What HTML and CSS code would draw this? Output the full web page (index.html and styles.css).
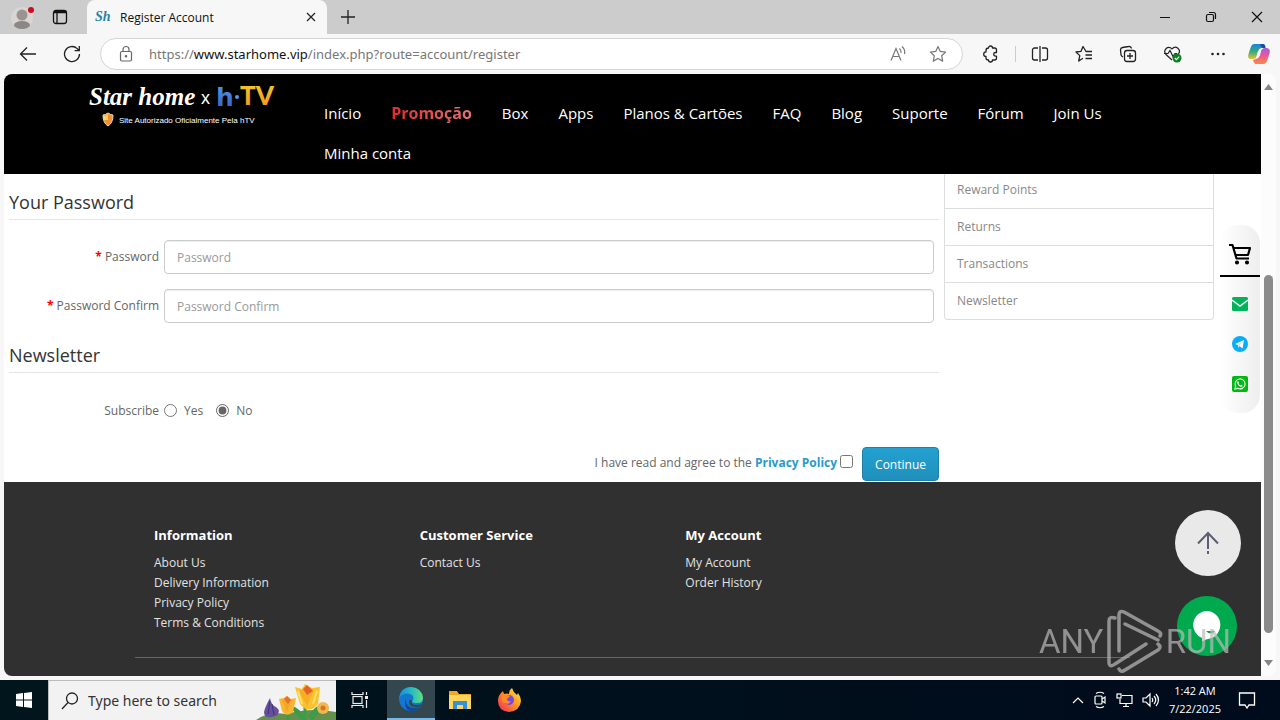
FILE: index.html
```
<!DOCTYPE html>
<html lang="en">
<head>
<meta charset="utf-8">
<title>Register Account</title>
<link rel="stylesheet" href="styles.css">
</head>
<body>
<div class="desktop">
  <header class="tabbar">
    <button class="plain avatar" aria-label="Profile"><svg width="26" height="26" viewBox="0 0 26 26"><circle cx="12" cy="14" r="11" fill="#d9d5d3"/><circle cx="12" cy="11" r="5.500" fill="#999491"/><ellipse cx="12" cy="21" rx="8" ry="4" fill="#8c8784"/><circle cx="21" cy="6" r="3" fill="#d00a20"/></svg></button>
    <button class="plain tabs-menu" aria-label="Tab actions"><svg width="16" height="16" viewBox="0 0 16 16" fill="none" stroke="#111" stroke-width="1.300"><rect x="1.500" y="1.500" width="13" height="13" rx="2.500"/><path d="M2 3h12" stroke-width="2.500"/><path d="M5 4v10"/></svg></button>
    <div class="tab">
      <span class="favicon">Sh</span>
      <span class="tab-title">Register Account</span>
      <button class="plain" aria-label="Close tab"><svg width="12" height="12" viewBox="0 0 12 12" stroke="#222" stroke-width="1.200"><path d="M2 2l8 8M10 2l-8 8"/></svg></button>
    </div>
    <button class="plain new-tab" aria-label="New tab"><svg width="16" height="16" viewBox="0 0 16 16" stroke="#222" stroke-width="1.300"><path d="M8 1v14M1 8h14"/></svg></button>
    <div class="window-buttons">
      <button class="plain" aria-label="Minimize"><svg width="12" height="12" viewBox="0 0 12 12" stroke="#111"><path d="M1 6.500h10"/></svg></button>
      <button class="plain" aria-label="Restore"><svg width="12" height="12" viewBox="0 0 12 12" fill="none" stroke="#111" stroke-width="1.200"><rect x="1.500" y="3.500" width="7" height="7" rx="1.500"/><path d="M4 1.500h4.500a2 2 0 0 1 2 2V8"/></svg></button>
      <button class="plain" aria-label="Close"><svg width="12" height="12" viewBox="0 0 12 12" stroke="#111" stroke-width="1.200"><path d="M1 1l10 10M11 1L1 11"/></svg></button>
    </div>
  </header>

  <div class="toolbar">
    <button class="plain tool" aria-label="Back"><svg width="18" height="18" viewBox="0 0 18 18" fill="none" stroke="#222" stroke-width="1.300"><path d="M17 9H1.500M8 2.500L1.500 9 8 15.500"/></svg></button>
    <button class="plain tool" aria-label="Refresh"><svg width="18" height="18" viewBox="0 0 18 18" fill="none" stroke="#222" stroke-width="1.300"><path d="M16.500 9a7.500 7.500 0 1 1-2.300-5.400L16 5.500M16.300 1v4.700h-4.700"/></svg></button>
    <div class="address">
      <svg width="16" height="18" viewBox="0 0 16 18" fill="none" stroke="#666" stroke-width="1.200"><rect x="2.500" y="6.500" width="11" height="9.500" rx="1.500"/><path d="M5 6.500V4.500a3 3 0 0 1 6 0v2"/><circle cx="8" cy="11.300" r=".7" fill="#666"/></svg>
      <div class="url">https://<b>www.starhome.vip</b>/index.php?route=account/register</div>
      <button class="plain" aria-label="Read aloud"><svg width="18" height="18" viewBox="0 0 18 18" fill="none" stroke="#777" stroke-width="1.200"><path d="M2 15.500L7 3.500l5 12M3.800 11.500h6.400M10.500 3.500q2 1.800 1.500 4.500M13 1.500q3.500 3 2.500 7.500"/></svg></button>
      <button class="plain" aria-label="Add to favorites"><svg width="18" height="18" viewBox="0 0 18 18" fill="none" stroke="#777" stroke-width="1.200" stroke-linejoin="round"><path d="M9 1.500l2.300 4.900 5.300.7-3.900 3.700 1 5.300L9 13.500l-4.700 2.600 1-5.300L1.400 7.100l5.300-.7z"/></svg></button>
    </div>
    <div class="tools">
      <button class="plain tool" aria-label="Extensions"><svg width="18" height="18" viewBox="0 0 18 18" fill="none" stroke="#222" stroke-width="1.300" stroke-linejoin="round"><path d="M4 5.500Q4 3 6.500 3a2 2 0 0 1 4 0h2q2 0 2 2v2.500h-1a1.800 1.800 0 0 0 0 3.600h1V13q0 2-2 2h-2a2 2 0 0 1-4 0Q4 15 4 13v-1.500a2.300 2.300 0 0 1 0-4.600z"/></svg></button>
      <i class="divider"></i>
      <button class="plain tool" aria-label="Split screen"><svg width="18" height="18" viewBox="0 0 18 18" fill="none" stroke="#222" stroke-width="1.300"><path d="M7 3H3.500a2 2 0 0 0-2 2v8a2 2 0 0 0 2 2H7M11 3h3.500a2 2 0 0 1 2 2v8a2 2 0 0 1-2 2H11M9 1v16"/></svg></button>
      <button class="plain tool" aria-label="Favorites"><svg width="18" height="18" viewBox="0 0 18 18" fill="none" stroke="#222" stroke-width="1.300" stroke-linejoin="round"><path d="M17 6.500h-6L8 1.500 6 6.300l-5 .7 3.800 3.600L3.700 16 8 13.300M10.500 10H17M10.500 13.500H17"/></svg></button>
      <button class="plain tool" aria-label="Collections"><svg width="18" height="18" viewBox="0 0 18 18" fill="none" stroke="#222" stroke-width="1.300"><path d="M4 12l-.5-.3A3 3 0 0 1 2 9.800L1.500 5a2.500 2.500 0 0 1 2-2.500l6-1A2.500 2.500 0 0 1 12.500 3.500"/><rect x="5.500" y="5.500" width="11" height="11" rx="2.500"/><path d="M11 8v6M8 11h6"/></svg></button>
      <button class="plain tool" aria-label="Browser essentials"><svg width="20" height="18" viewBox="0 0 20 18" fill="none" stroke="#222" stroke-width="1.200"><path d="M9 15L3 9.500C-.5 5.500 5-.5 9 3.800c4-4.300 9.500 1 6.500 5M1 8.500h4l2-3 3 6 2-3h2"/><circle cx="14" cy="13" r="4.500" fill="#0b8020" stroke="none"/><path d="M11.800 13l1.600 1.600 2.800-3" stroke="#fff"/></svg></button>
      <button class="plain tool" aria-label="Settings and more"><svg width="18" height="18" viewBox="0 0 18 18" fill="#222"><circle cx="3.500" cy="9" r="1.300"/><circle cx="9" cy="9" r="1.300"/><circle cx="14.500" cy="9" r="1.300"/></svg></button>
      <button class="plain tool copilot" aria-label="Copilot"><svg width="24" height="22" viewBox="0 0 24 22"><defs><linearGradient id="ca" x2="0" y2="1"><stop stop-color="#1684d8"/><stop offset=".55" stop-color="#3dae75"/><stop offset="1" stop-color="#f4bd28"/></linearGradient><linearGradient id="cb" x2="0" y2="1"><stop stop-color="#a75be0"/><stop offset=".5" stop-color="#ec5a92"/><stop offset="1" stop-color="#fa8a45"/></linearGradient></defs><path d="M7 1h9q2 0 2.500 3L15 5q-3 0-4 4l-1 4q-1 3-4 3H4Q0 16 1.500 11L4 3.500Q5 1 7 1z" fill="url(#ca)"/><path d="M17 21H9q-2 0-3-4l3-1q3-1 4-4l1-4q1-3 4-3h2q4 1 2.500 5.500L20 18q-1 3-3 3z" fill="url(#cb)"/><path d="M11 8l3-1-2 7-3 1z" fill="#fff"/><path d="M13 1h3q2 0 2.500 4h-3q-1.500-1-2.500-4z" fill="#184ca5"/></svg></button>
    </div>
  </div>

  <div class="frame">
    <div class="page">
      <header class="site-header">
        <a class="logo" href="#">
          <svg width="210" height="54" viewBox="0 -4 210 54"><defs><linearGradient id="ht" x2="0" y2="1"><stop stop-color="#5798e8"/><stop offset="1" stop-color="#315cc0"/></linearGradient><linearGradient id="tv" x2="0" y2="1"><stop stop-color="#f7d02b"/><stop offset="1" stop-color="#ef9021"/></linearGradient></defs>
            <text class="logo-script" x="1" y="25">Star home</text><text class="logo-x" x="113" y="24">x</text>
            <text class="logo-h" x="128" y="26">h</text><circle cx="149" cy="17" r="2" fill="#5798e8"/><text class="logo-tv" x="152" y="25">TV</text>
            <path d="M20 33q-3 2-5 2 0 8 5 11 5-3 5-11-2 0-5-2z" fill="#f28d38" stroke="#f7dcae"/><path d="M20 34v6h-4q-1-2-1-4 3 0 5-2z" fill="#fbd45b"/>
            <text class="logo-note" x="31" y="43">Site Autorizado Oficialmente Pela hTV</text></svg>
        </a>
        <nav class="menu"><a href="#">Início</a><a class="promo" href="#">Promoção</a><a href="#">Box</a><a href="#">Apps</a><a href="#">Planos &amp; Cartões</a><a href="#">FAQ</a><a href="#">Blog</a><a href="#">Suporte</a><a href="#">Fórum</a><a href="#">Join Us</a><a href="#">Minha conta</a></nav>
      </header>

      <main class="content">
        <form class="form">
          <h2>Your Password</h2>
          <div class="fields">
            <label for="pw"><span class="star">*</span> Password</label><input class="text-input" id="pw" type="password" placeholder="Password">
            <label for="pw2"><span class="star">*</span> Password Confirm</label><input class="text-input" id="pw2" type="password" placeholder="Password Confirm">
          </div>
          <h2>Newsletter</h2>
          <div class="subscribe"><span class="sub-label">Subscribe</span><label><input type="radio" name="news">Yes</label><label><input type="radio" name="news" checked>No</label></div>
          <div class="agree"><label for="agree">I have read and agree to the <a href="#">Privacy Policy</a></label><input id="agree" type="checkbox"><button class="continue" type="button">Continue</button></div>
        </form>
        <aside class="account-list"><a href="#">Reward Points</a><a href="#">Returns</a><a href="#">Transactions</a><a href="#">Newsletter</a></aside>
      </main>

      <footer class="site-footer">
        <div class="footer-inner">
          <div class="footer-columns">
            <section><h5>Information</h5><a href="#">About Us</a><a href="#">Delivery Information</a><a href="#">Privacy Policy</a><a href="#">Terms &amp; Conditions</a></section>
            <section><h5>Customer Service</h5><a href="#">Contact Us</a></section>
            <section><h5>My Account</h5><a href="#">My Account</a><a href="#">Order History</a></section>
          </div>
        </div>
      </footer>

      <div class="side-dock">
        <a class="cart" href="#" aria-label="Cart"><svg width="24" height="22" viewBox="0 0 24 22" fill="none" stroke="#000" stroke-width="2.200" stroke-linejoin="round"><path d="M1 2h3.500l4 13.500H21M5.500 5H22l-2 7H7.500"/><circle cx="9" cy="19.500" r="1.300" fill="#000" stroke-width="1.500"/><circle cx="19" cy="19.500" r="1.300" fill="#000" stroke-width="1.500"/></svg></a>
        <a href="#" aria-label="Email"><svg width="16" height="16" viewBox="0 0 16 16"><rect y="1" width="16" height="14" rx="1.500" fill="#00b35a"/><path d="M0 4l8 6 8-6" fill="none" stroke="#e8fff2" stroke-width="1.500"/></svg></a>
        <a href="#" aria-label="Telegram"><svg width="16" height="16" viewBox="0 0 16 16"><circle cx="8" cy="8" r="8" fill="#08aef5"/><path d="M3 8l9-4-1.500 8.500L7.500 10l-1 2L6 9z" fill="#fff"/><path d="M6 9l4-3-3 4" fill="#a8dcf5"/></svg></a>
        <a href="#" aria-label="WhatsApp"><svg width="16" height="16" viewBox="0 0 16 16"><rect width="16" height="16" rx="2" fill="#00b812"/><path d="M3 13l.7-2.700a5 5 0 1 1 2 2z" fill="none" stroke="#eaffea" stroke-width="1.200"/><path d="M6 5l1 2-.5.600q.8 1.400 2 1.900l.7-.7 1.500.800q-.4 1.500-1.800 1.200Q5.500 10 5.200 6.500q0-1 .8-1.500z" fill="#fff"/></svg></a>
      </div>
      <button class="plain to-top" aria-label="Back to top"><svg width="24" height="24" viewBox="0 0 24 24" fill="none" stroke="#5e5e72" stroke-width="2"><path d="M12 2v16M2 12.500L12 2l10 10.500M12 20v3"/></svg></button>
      <button class="plain chat" aria-label="Chat"><svg width="30" height="32" viewBox="0 0 30 32"><path d="M15 1a14 14 0 0 1 3 27.500q-4 .5-8 3V28A14 14 0 0 1 15 1z" fill="#fff"/><path d="M14 21h9q-4 5-9 0z" fill="#00a84e"/></svg></button>
    </div>
    <div class="scrollbar"><svg width="9" height="6"><path d="M0 6l4.500-6L9 6z" fill="#858585"/></svg><div class="track"><div class="thumb"></div></div><svg width="9" height="6"><path d="M0 0l4.500 6L9 0z" fill="#858585"/></svg></div>
    <div class="watermark"><span>ANY</span><svg width="56" height="64" viewBox="0 0 56 64" fill="none" stroke="currentColor" stroke-width="3.500" stroke-linejoin="round" stroke-linecap="round"><path d="M8 9Q2 7 2 12v42q1 5 6 1l31-20M18 15l33 16M12 42V6q0-5 5-3l34 19q4 2 2 5M12 60q2 4 6 1l33-20q4-3 0-6"/></svg><span>RUN</span></div>
  </div>

  <footer class="taskbar">
    <button class="plain start" aria-label="Start"><svg width="16" height="16" viewBox="0 0 16 16" fill="#fff"><path d="M0 2l7-1v6.500H0zM8 .9L16 0v7.500H8zM0 8.500h7V15l-7-1zM8 8.500h8V16l-8-1z"/></svg></button>
    <label class="search"><svg width="18" height="18" viewBox="0 0 18 18" fill="none" stroke="#222" stroke-width="1.300"><circle cx="11" cy="6.500" r="5.500"/><path d="M7 10.500L1 17"/></svg><input type="text" placeholder="Type here to search" aria-label="Search">
      <svg class="flowers" width="80" height="39" viewBox="0 0 80 39"><path d="M0 39q12-9 30-6 25-7 50-2v8z" fill="#64924e"/><path d="M49 39V26M48 36q-7-8-11-9l10 12zM53 36q9-12 13-11L55 39M32 39V26" fill="#45a650" stroke="#3e9b47" stroke-width="3"/><path d="M14 17q1 7 6 9 6 4 0 9-12 4-12-4 1-5 6-14z" fill="#67509b"/><path d="M14 20l-2 13M16 23l2 11" stroke="#403174"/><path d="M23 18l5-1 3-2 4 3 5-1-3 14q-6 6-11-1z" fill="#f8b52e"/><path d="M26 19l5 12 5-12" fill="#f5a527"/><path d="M28 18l3-3 4 4-3 4z" fill="#e3702b"/><path d="M39 6l7 2 3-5 7 4 8-1-2 17q-9 11-18 0z" fill="#fbc22d"/><path d="M43 10l8 15 7-16-6-3z" fill="#f7ae27"/><path d="M47 8l4-4 6 6-6 4z" fill="#e3642b"/><path d="M61 10l-4 13M42 10l4 13" stroke="#ffe16b" stroke-width="2"/><circle cx="67" cy="27" r="6" fill="#f3b84b"/><circle cx="67" cy="27" r="2.500" fill="#d77328"/></svg></label>
    <button class="plain app" aria-label="Task view"><svg width="18" height="18" viewBox="0 0 18 18" fill="none" stroke="#eee" stroke-width="1.200"><path d="M1 1v2.500h11V1M1 17v-2.500h11V17"/><rect x="2" y="5.500" width="9" height="7"/><path d="M15.500 1v3M15.500 9v8"/><path d="M14 6.500h3" stroke-width="3"/></svg></button>
    <button class="plain app active" aria-label="Edge"><svg width="26" height="26" viewBox="0 0 26 26"><defs><linearGradient id="ea"><stop stop-color="#168fdd"/><stop offset=".55" stop-color="#29bdc0"/><stop offset="1" stop-color="#63df77"/></linearGradient></defs><circle cx="13" cy="13" r="12" fill="#1376cf"/><path d="M1 12Q3 1 13 1q11 1 12 11 0 5-6 5-5 0-5-2 3-3 0-6Q7 5 1 12z" fill="url(#ea)"/><path d="M8 12q-1 10 9 10 4 0 6-3-3 6-10 6Q5 24 8 12z" fill="#104b98"/><path d="M14 14q-2 5 5 5 4 0 6-2-2 3-5 4-9 1-9-5 0-3 3-2z" fill="#35474e"/></svg></button>
    <button class="plain app" aria-label="File Explorer"><svg width="22" height="20" viewBox="0 0 22 20"><path d="M0 1h8l2 3h12v15H0z" fill="#f3a91c"/><path d="M0 5h22v14H0z" fill="#ffd65b"/><path d="M4 11h14v8h-4v-4H8v4H4z" fill="#3491d8"/></svg></button>
    <button class="plain app" aria-label="Firefox"><svg width="24" height="24" viewBox="0 0 24 24"><defs><linearGradient id="ff" x1="1" x2="0" y2="1"><stop stop-color="#fff04a"/><stop offset=".45" stop-color="#ff9822"/><stop offset="1" stop-color="#ef225f"/></linearGradient></defs><path d="M4 5l2-2 1 3q3-1 5 0 0-4 3-6 1 4 5 7l1-2q3 4 3 8-1 10-12 11Q1 23 1 13q0-5 3-8z" fill="url(#ff)"/><circle cx="12" cy="12" r="5" fill="#7848da"/><path d="M5 8q4-2 8 0l-3 3q0 3 4 2-2 4-6 2-4-1-3-7z" fill="#ff8b24"/></svg></button>
    <div class="tray">
      <svg width="12" height="8" viewBox="0 0 12 8" fill="none" stroke="#fff" stroke-width="1.200"><path d="M1 7l5-5 5 5"/></svg>
      <svg width="14" height="18" viewBox="0 0 14 18" fill="none" stroke="#fff" stroke-width="1.200"><rect x="2" y="5" width="7" height="8" rx="1"/><path d="M9 8l3-2v6l-3-2M3 2.500q4-2.500 8 0M3 15.500q4 2.500 8 0"/></svg>
      <svg width="17" height="16" viewBox="0 0 17 16" fill="none" stroke="#fff" stroke-width="1.200"><path d="M6 3.500h10v8H4V7M7 14.500h6M10 11.500v3"/><rect x="1" y="2" width="4" height="4"/></svg>
      <svg width="18" height="16" viewBox="0 0 18 16" fill="none" stroke="#fff" stroke-width="1.200"><path d="M1 6h3l4-4v12l-4-4H1zM10 6q1.500 2 0 4M12 4q3.500 4 0 8M14 2q5 6 0 12"/></svg>
      <div class="clock"><time>1:42 AM</time><time>7/22/2025</time></div>
      <svg class="notice" width="18" height="18" viewBox="0 0 18 18" fill="none" stroke="#fff" stroke-width="1.300"><path d="M1.500 2h15v12H11l-2 3-2-3H1.500z"/></svg>
    </div>
  </footer>
</div>
</body>
</html>
```
FILE: styles.css
```
* { box-sizing: border-box; }
body { margin: 0; font-family: "Open Sans", "Noto Sans", sans-serif; font-size: 12px; color: #666; }
a { color: inherit; text-decoration: none; }
svg { display: block; flex: none; }
.plain { display: flex; align-items: center; justify-content: center; flex: none; padding: 0; border: 0; background: transparent; }
.desktop { display: flex; flex-direction: column; height: 100vh; overflow: hidden; background: #f7f7f7; }

.tabbar { display: flex; align-items: center; flex: none; height: 34px; background: #ccc; }
.avatar { margin-left: 10px; }
.tabs-menu { margin-left: 16px; }
.tab { display: flex; align-items: center; align-self: stretch; width: 240px; margin-left: 19px; padding: 0 10px 0 8px; gap: 8px; border-radius: 8px 8px 0 0; background: #f7f7f7; color: #111; }
.favicon { width: 17px; font: italic bold 14px "Liberation Serif", serif; color: #2684ab; }
.tab-title { flex: 1; font-family: "Open Sans", sans-serif; }
.new-tab { margin-left: 13px; }
.window-buttons { display: flex; gap: 34px; margin-left: auto; padding-right: 17px; }

.toolbar { display: flex; align-items: center; flex: none; height: 40px; padding: 0 10px 0 16px; }
.toolbar > .tool { width: 24px; margin-right: 20px; }
.toolbar > .tool + .tool { margin-right: 16px; }
.address { display: flex; align-items: center; flex: 1; height: 32px; padding: 0 15px 0 17px; border: 1px solid #d5d5d5; border-radius: 16px; background: #fff; }
.url { flex: 1; padding-left: 15px; font-family: "Noto Sans", sans-serif; font-size: 13px; color: #777; white-space: nowrap; }
.url b { font-weight: 400; color: #111; }
.address .plain { margin-left: 22px; }
.tools { display: flex; align-items: center; gap: 26px; width: 288px; margin-left: 19px; }
.divider { flex: none; width: 1px; height: 16px; margin: 0 -11px; background: #ccc; }
.copilot { width: 16px; margin-left: -2px; }

.frame { position: relative; display: flex; flex: 1; min-height: 0; margin: 0 4px 4px; overflow: hidden; border-radius: 8px; background: #fcfcfc; }
.page { position: relative; display: flex; flex-direction: column; flex: 1; min-width: 0; background: #fff; }
.scrollbar { display: flex; flex-direction: column; align-items: center; width: 15px; padding: 10px 0; }
.track { display: flex; flex-direction: column; flex: 1; width: 9px; padding: 185px 0 27px; }
.thumb { flex: 1; border-radius: 5px; background: #8b8b8b; }

.site-header { display: flex; flex: none; min-height: 100px; padding: 2px 70px 0 84px; background: #000; color: #fff; }
.logo { flex: none; width: 236px; }
.logo text { fill: #fff; }
.logo .logo-script { font: italic bold 25px "Liberation Serif", serif; }
.logo .logo-x { font: 18px "Liberation Sans", sans-serif; }
.logo .logo-h { font: bold 25px "DejaVu Sans", sans-serif; fill: url(#ht); }
.logo .logo-tv { font: 900 26px Lato, sans-serif; fill: url(#tv); }
.logo .logo-note { font: 8px "Liberation Sans", sans-serif; }
.menu { display: flex; flex-wrap: wrap; align-content: flex-start; column-gap: 30px; padding-top: 17px; font-size: 15px; line-height: 40px; white-space: nowrap; }
.promo { font-size: 16px; font-weight: 700; background: linear-gradient(90deg, #e02c30, #e57373); background-clip: text; color: transparent; }

.content { display: flex; flex: none; align-items: flex-start; gap: 5px; padding: 0 47px 0 5px; }
.form { flex: 1; padding-top: 15px; }
h2 { margin: 0; padding-bottom: 4px; border-bottom: 1px solid #e5e5e5; font-size: 18px; font-weight: 400; line-height: 26px; color: #333; }
.fields { display: grid; grid-template-columns: 150px 1fr; gap: 15px 5px; padding: 20px 5px 19px 0; }
.fields label { padding-top: 7px; line-height: 20px; text-align: right; }
.star { font-weight: 700; color: #f00; }
.text-input { height: 34px; min-width: 0; padding: 0 12px; border: 1px solid #ccc; border-radius: 4px; box-shadow: inset 0 1px 1px #ededed; font: inherit; color: #555; }
.text-input::placeholder { color: #999; }
.subscribe { display: flex; align-items: center; height: 20px; margin-top: 27px; }
.sub-label { width: 150px; margin-right: 5px; text-align: right; }
.subscribe label { display: flex; align-items: center; margin-right: 13px; }
.subscribe input { width: 13px; height: 13px; margin: 0 7px 0 0; accent-color: #666; }
.agree { display: flex; justify-content: flex-end; margin-top: 27px; padding-bottom: 1px; line-height: 32px; }
.agree a { font-weight: 700; color: #2a9acb; }
.agree input { width: 13px; height: 13px; margin: 8px 9px 0 3px; }
.continue { height: 34px; padding: 2px 12px 0; border: 1px solid #1c80a9; border-radius: 4px; background: linear-gradient(#23a1d1, #1f90bb); color: #fff; font: inherit; line-height: 30px; }
.account-list { display: flex; flex-direction: column; width: 270px; border: 1px solid #ddd; border-top: 0; border-radius: 0 0 4px 4px; color: #888; }
.account-list a { padding: 8px 12px; border-bottom: 1px solid #ddd; line-height: 20px; }
.account-list a:first-child { padding: 6px 12px 8px; }
.account-list a:last-child { border-bottom: 0; }

.site-footer { flex: 1; padding: 40px 131px 0; background: #303030; color: #e2e2e2; }
.footer-inner { padding: 0 0 24px 19px; border-bottom: 1px solid #666; }
.footer-columns { display: grid; grid-template-columns: repeat(3, 1fr); max-width: 797px; }
.footer-columns section { display: flex; flex-direction: column; line-height: 20px; }
h5 { margin: 0 0 4px; padding: 3px 0 4px; font-size: 13px; font-weight: 700; line-height: 20px; color: #fff; }

.side-dock { position: absolute; top: 151px; right: 1px; display: flex; flex-direction: column; align-items: center; width: 40px; padding: 18px 0 21px; gap: 24px; border-radius: 18px; background: linear-gradient(90deg, #fff, #eee); }
.cart { display: flex; justify-content: center; width: 40px; height: 34px; margin-bottom: -5px; border-bottom: 2px solid #000; }
.to-top { position: absolute; right: 20px; bottom: 100px; width: 66px; height: 66px; border-radius: 50%; background: #e9e9e9; }
.chat { position: absolute; right: 24px; bottom: 20px; width: 60px; height: 60px; border-radius: 50%; background: #00a84e; }
.watermark { position: absolute; right: 45px; bottom: 3px; display: flex; align-items: center; justify-content: space-between; width: 192px; color: #bbb; opacity: .7; font: 33px Roboto, sans-serif; font-weight: 400; }

.taskbar { display: flex; flex: none; height: 40px; background: linear-gradient(90deg, #00151c, #000b1c); color: #fff; font-family: "Noto Sans", sans-serif; }
.start { width: 48px; }
.search { display: flex; align-items: center; width: 288px; padding-left: 12px; border: 1px solid #bbb; border-right: 0; border-bottom: 0; background: #f2f2f2; }
.search input { flex: 1; min-width: 0; padding: 0 0 0 9px; border: 0; background: transparent; font: 14px "Noto Sans", sans-serif; }
.search input::placeholder { color: #333; }
.app { width: 48px; }
.app + .app { margin-right: 1px; }
.active { border-bottom: 2px solid #76b9ed; background: #35474e; margin-left: 3px; }
.tray { display: flex; align-items: center; gap: 9px; margin-left: auto; padding-right: 24px; }
.clock { display: flex; flex-direction: column; align-items: center; line-height: 18px; font-family: "Open Sans", sans-serif; font-size: 11px; }
.notice { margin-left: 8px; }
```
